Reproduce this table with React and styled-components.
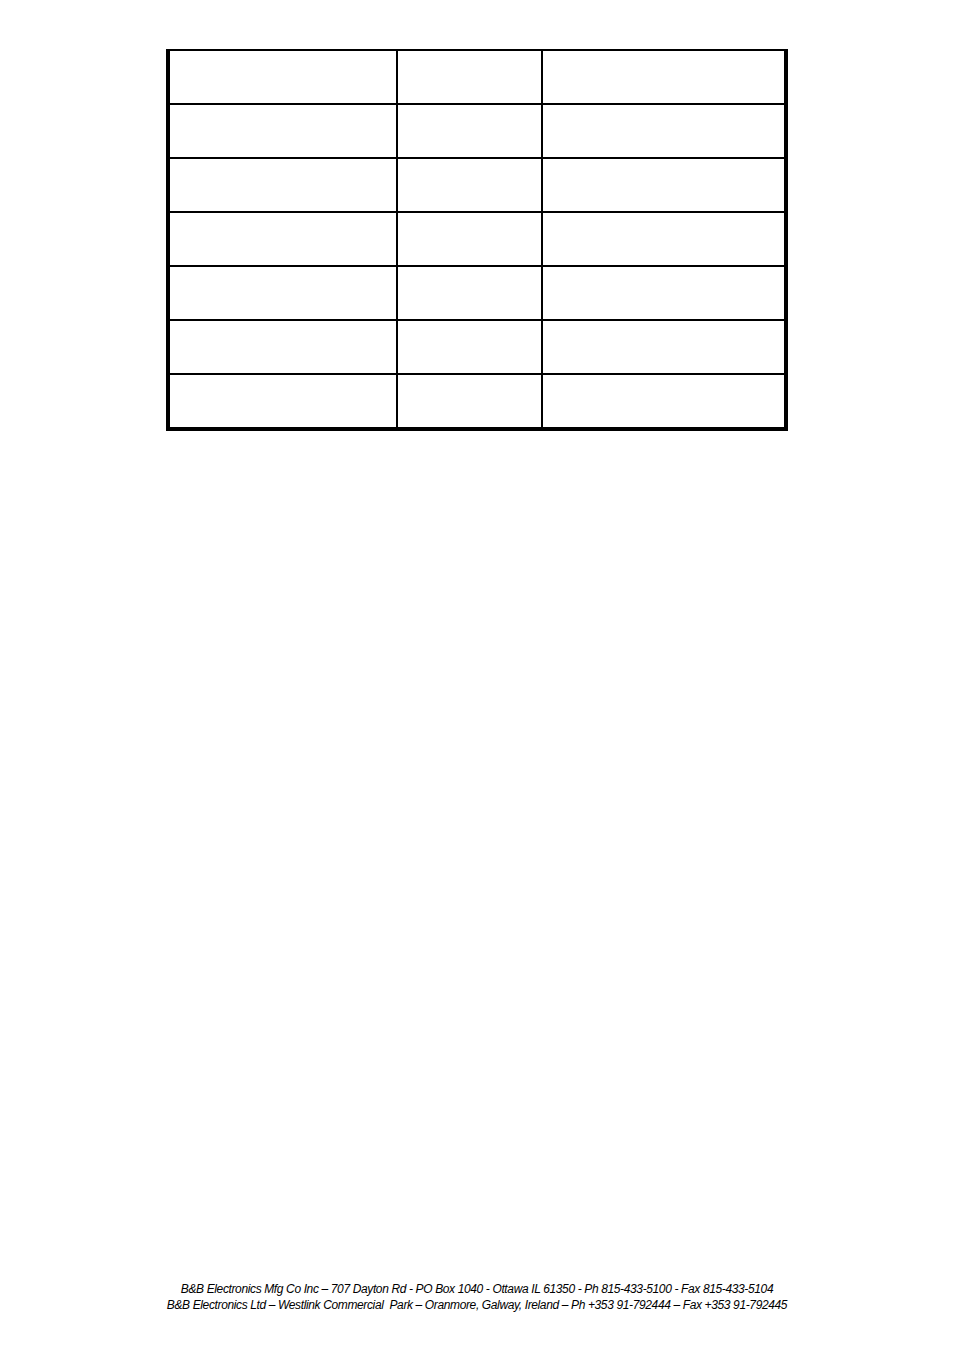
import React from 'react'
import styled, { createGlobalStyle } from 'styled-components'

const GlobalStyle = createGlobalStyle`
  html, body {
    margin: 0;
    padding: 0;
    background: #ffffff;
  }
`

const Page = styled.div`
  width: 954px;
  height: 1354px;
  display: flex;
  flex-direction: column;
  align-items: center;
  padding-top: 49px;
  box-sizing: border-box;
  background: #ffffff;
`

// black background shows through the gaps as cell lines
const Table = styled.div`
  display: grid;
  grid-template-columns: 226px 143px 241px;
  grid-auto-rows: 52px;
  gap: 2px;
  padding: 2px 4px 4px 4px;
  background: #000000;
`

const Cell = styled.div`
  background: #ffffff;
`

const Footer = styled.div`
  margin-top: auto;
  padding-bottom: 41px;
  text-align: center;
  font-family: 'Liberation Sans', Arial, sans-serif;
  font-style: italic;
  font-size: 12px;
  line-height: 16px;
  color: #000000;
  white-space: pre;
  letter-spacing: -0.37px;
`

const rows = Array.from({ length: 7 })

const App = () => {
  return (<Page>
    <GlobalStyle />
    <Table>
      {rows.map((_, i) => (
        <React.Fragment key={i}>
          <Cell />
          <Cell />
          <Cell />
        </React.Fragment>
      ))}
    </Table>
    <Footer>
      <div>B&amp;B Electronics Mfg Co Inc – 707 Dayton Rd - PO Box 1040 - Ottawa IL 61350 - Ph 815-433-5100 - Fax 815-433-5104</div>
      <div>B&amp;B Electronics Ltd – Westlink Commercial  Park – Oranmore, Galway, Ireland – Ph +353 91-792444 – Fax +353 91-792445</div>
    </Footer>
  </Page>)
}

export default App
